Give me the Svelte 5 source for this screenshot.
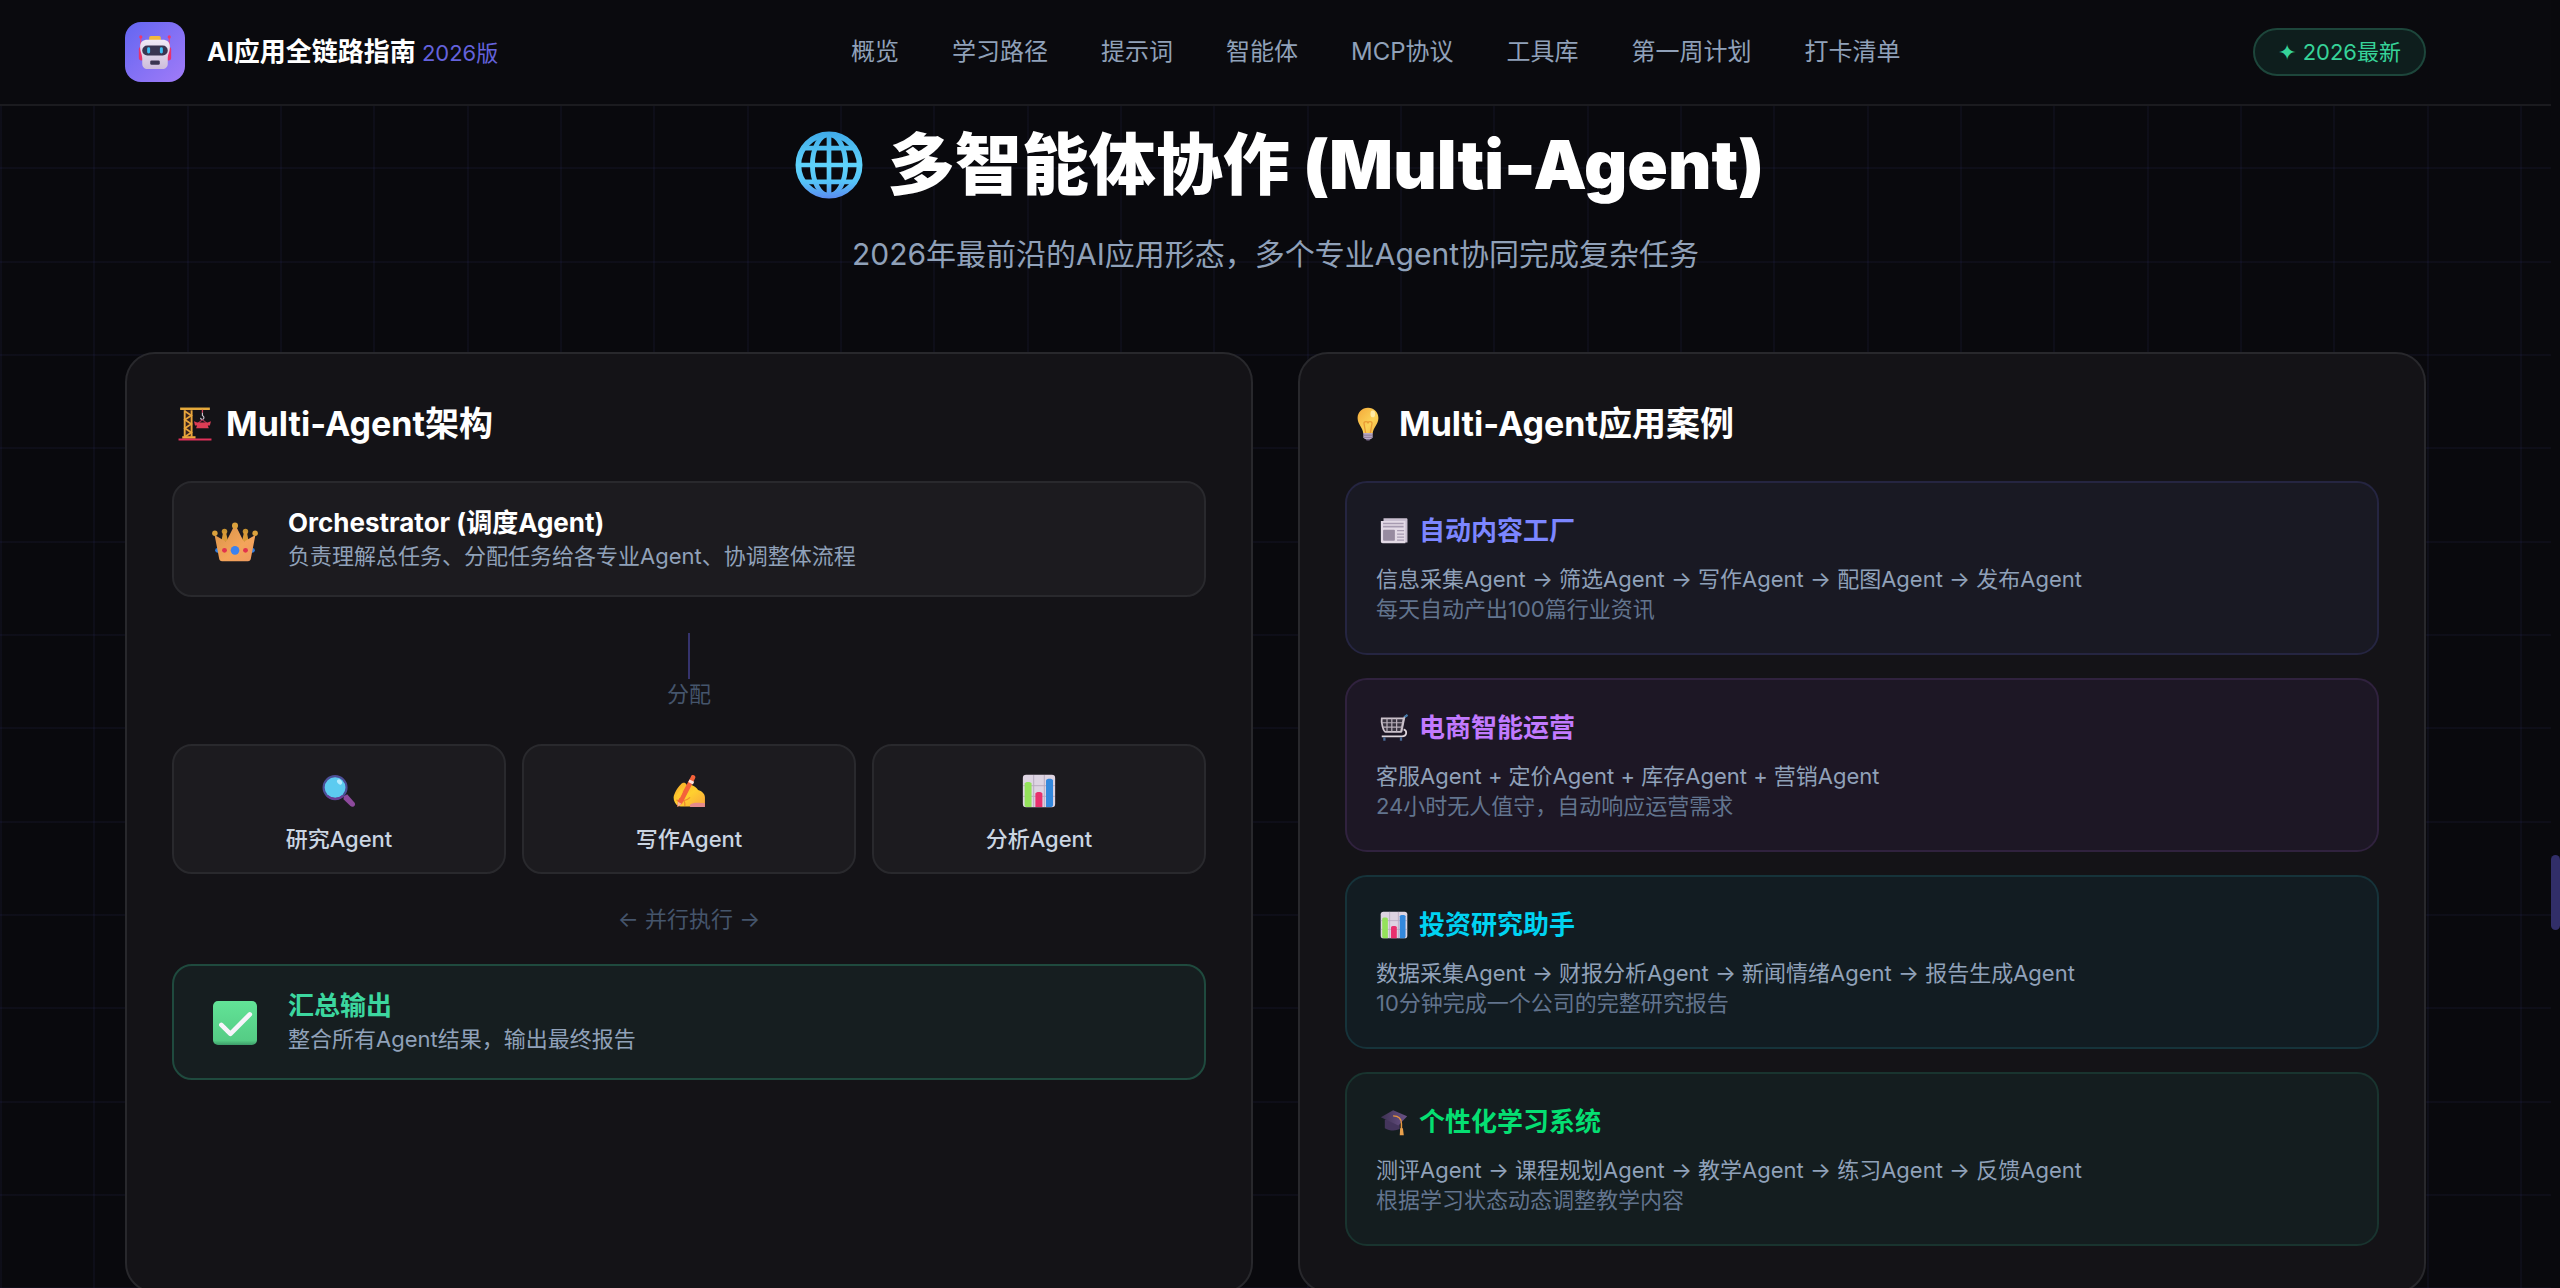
<script>
    const navLinks = ['概览', '学习路径', '提示词', '智能体', 'MCP协议', '工具库', '第一周计划', '打卡清单']

    const agents = [
        { icon: 'magnifier', name: '研究Agent' },
        { icon: 'writing', name: '写作Agent' },
        { icon: 'chart', name: '分析Agent' }
    ]

    const cases = [
        {
            icon: 'news',
            color: 'indigo',
            title: '自动内容工厂',
            flow: '信息采集Agent → 筛选Agent → 写作Agent → 配图Agent → 发布Agent',
            note: '每天自动产出100篇行业资讯'
        },
        {
            icon: 'cart',
            color: 'purple',
            title: '电商智能运营',
            flow: '客服Agent + 定价Agent + 库存Agent + 营销Agent',
            note: '24小时无人值守，自动响应运营需求'
        },
        {
            icon: 'chart',
            color: 'cyan',
            title: '投资研究助手',
            flow: '数据采集Agent → 财报分析Agent → 新闻情绪Agent → 报告生成Agent',
            note: '10分钟完成一个公司的完整研究报告'
        },
        {
            icon: 'cap',
            color: 'green',
            title: '个性化学习系统',
            flow: '测评Agent → 课程规划Agent → 教学Agent → 练习Agent → 反馈Agent',
            note: '根据学习状态动态调整教学内容'
        }
    ]
</script>

{#snippet icon(name)}
    <svg class="icon" viewBox="0 0 32 32" aria-hidden="true">
        {#if name === 'robot'}
            <path d="M2.6 2v14M29.4 2v14" stroke="#e8457f" stroke-width="1.1" />
            <circle cx="2.6" cy="1.8" r="1.5" fill="#f0386b" />
            <circle cx="29.4" cy="1.8" r="1.5" fill="#f0386b" />
            <rect x="0.8" y="11" width="5" height="13" rx="2.5" fill="#e8336a" />
            <rect x="26.2" y="11" width="5" height="13" rx="2.5" fill="#e8336a" />
            <rect x="10.5" y="1" width="11" height="6" rx="1.6" fill="#f3b93c" />
            <path d="M9 4.5h14c4.500 0 7 2.500 7 6.500 0 5-2 7-2 11v5c0 3-2 5-5 5H9c-3 0-5-2-5-5v-5c0-4-2-6-2-11 0-4 2.500-6.500 7-6.500z" fill="url(#robotFace)" />
            <rect x="4" y="9.800" width="24" height="9.400" rx="4.700" fill="#3a3550" />
            <rect x="8.600" y="11.500" width="2.800" height="6" rx="1.400" fill="#3cc0f5" />
            <rect x="20.600" y="11.500" width="2.800" height="6" rx="1.400" fill="#3cc0f5" />
            <rect x="11.500" y="24" width="9" height="4" rx="1.200" fill="#3a3550" />
        {:else if name === 'globe'}
            <circle cx="16" cy="16" r="14.400" fill="none" stroke="url(#globeLine)" stroke-width="2.700" />
            <ellipse cx="16" cy="16" rx="7.800" ry="14.400" fill="none" stroke="url(#globeLine)" stroke-width="2.300" />
            <path d="M14.900 1.500h2.200v29h-2.200zM1.500 14.900h29v2.200h-29zM4.500 6.900h23v2.300h-23zM4.500 22.800h23v2.300h-23z" fill="url(#globeLine)" />
        {:else if name === 'crane'}
            <path d="M6 3h6v25H6z" fill="#3a2420" />
            <path d="M6.300 3v25M12.800 3v25" stroke="#e9a63c" stroke-width="1.800" />
            <path d="M6.500 4l6 4-6 4 6 4-6 4 6 4-6 4" fill="none" stroke="#e9a63c" stroke-width="1.600" />
            <path d="M2 0.500h28v2.300H2z" fill="#e5a93b" />
            <path d="M4 27.500h12.500v2.300H4z" fill="#f0a83c" />
            <path d="M0.500 29.700h31V31.600H0.500z" fill="#e0315a" />
            <path d="M23 2.500v3" stroke="#d3405e" stroke-width="1.200" />
            <path d="M23 5.500v2.500c2 1 1.800 3.600 0 3.800-1.200 0-1.800-.8-1.600-1.600" fill="none" stroke="#c9c3d0" stroke-width="1.100" />
            <path d="M23 12l-5 4M23 12l5 4" stroke="#a3324f" stroke-width="1" />
            <path d="M15 13.500l3 1h10l3-1-1 4h-2l1 2.500H17l1-2.500h-2z" fill="#dc3d55" />
        {:else if name === 'bulb'}
            <path d="M16 0.800c-5.600 0-9.800 4.200-9.800 9.600 0 6 4.800 8.600 5.400 14.600h8.800c.6-6 5.400-8.600 5.400-14.600C25.800 5 21.600.8 16 .8z" fill="url(#bulbGlass)" />
            <path d="M13.800 24.500l-1.600-9c0-2.200 3.800-2.200 3.800 0 0-2.200 3.800-2.200 3.800 0l-1.600 9" fill="none" stroke="#e99a35" stroke-width="1.200" />
            <ellipse cx="20.500" cy="6.500" rx="2.200" ry="3.200" fill="#fff1b8" opacity="0.800" />
            <path d="M11.600 24.500h8.800v4.500l-1.600 1.200h-5.600L11.600 29z" fill="#b9a9c4" />
            <path d="M11.600 26.500h8.800M12 28.600h8" stroke="#85738f" stroke-width="0.800" />
            <path d="M13.500 30h5l-1.200 1.600h-2.600z" fill="#7c6b8f" />
        {:else if name === 'crown'}
            <circle cx="8.700" cy="10" r="1.900" fill="#c79331" />
            <circle cx="23.300" cy="10" r="1.900" fill="#c79331" />
            <path d="M7.800 10h1.800l1.600 7H6.500zM22.400 10h1.800l1.300 7h-4.700z" fill="#d99a38" />
            <circle cx="3.800" cy="23.200" r="1.600" fill="#2f7de0" />
            <circle cx="28.200" cy="23.200" r="1.600" fill="#2f7de0" />
            <path d="M1.800 12.500l7.200 4.200c.5.300 1 .1 1.300-.4L15 7h2l4.700 9.300c.3.500.8.700 1.300.4l7.200-4.200-3.200 16.500c-.2 1.200-.8 1.700-2 1.700H7c-1.200 0-1.800-.5-2-1.700z" fill="url(#crownGold)" />
            <circle cx="16" cy="6" r="2.100" fill="#dba13c" />
            <circle cx="2" cy="11.300" r="1.900" fill="#dba13c" />
            <circle cx="30" cy="11.300" r="1.900" fill="#dba13c" />
            <circle cx="16" cy="23.200" r="3" fill="#3c82ee" />
            <circle cx="8.700" cy="23.200" r="1.700" fill="#e2334d" />
            <circle cx="23.300" cy="23.200" r="1.700" fill="#e2334d" />
        {:else if name === 'magnifier'}
            <path d="M20.500 21l3.200-2 7 8c1.600 2.600-1.600 5-3.900 3.200l-6.600-6.400z" fill="#8d4a9c" />
            <circle cx="12.300" cy="12.800" r="10.800" fill="#5ccbf0" stroke="#4c4f96" stroke-width="2" />
            <path d="M5 20.500a10.800 10.800 0 0 0 14.800 0" fill="none" stroke="#6b3f94" stroke-width="2" />
            <ellipse cx="16.500" cy="7.500" rx="2" ry="2.800" transform="rotate(-40 16.500 7.500)" fill="#b5ecff" />
        {:else if name === 'writing'}
            <path d="M8 10c2-2.500 5-2 5.500 0 4-.5 9 1.500 11 5 3.500 1 6.500 3.500 6.500 7v8.500H20c-6 0-12 .5-14-.5-3-1.500-4.500-5-4.500-8C2 18 5 13 8 10z" fill="url(#handYellow)" />
            <path d="M4 24.500c2 0 3 1.500 3 3.500M9.500 24c2 1 3 3 2.500 6M17 22c-2 2-3.500 3-6 3" fill="none" stroke="#ee8a2e" stroke-width="1.200" />
            <path d="M17 29c3-2.500 7-2 14-1.500V31H17z" fill="#e58a8a" />
            <path d="M17.800 2.500c.8-2.500 4.600-1.500 4.200 1L9.500 28l-4.500 3 .5-5.500z" fill="#f4623a" />
            <path d="M16.500 5.200l4.400 2.200-1.200 2.400-4.400-2.200z" fill="#ffe3dc" />
            <path d="M5.500 26l3.500 2-3.700 3z" fill="#f7b79a" />
            <path d="M8.500 14c1.500 1 2 3 1 4.500l-2 4c-2 0-3-1-3.500-2.500z" fill="#ffc92e" />
        {:else if name === 'chart'}
            <rect x="0.800" y="0.800" width="30.400" height="30.400" rx="3" fill="#ddd4e2" />
            <path d="M1 11h30M1 21h30M11 1v30M21 1v30" stroke="#b8aabf" stroke-width="0.900" />
            <path d="M2.500 9c0-2 6.500-2 6.500 0v22H4c-1 0-1.500-.8-1.500-1.800z" fill="#94e25b" />
            <path d="M12.600 18.500c0-2 6.600-2 6.600 0V31h-6.600z" fill="#e8306d" />
            <path d="M22.600 6c0-2 6.600-2 6.600 0v23.200c0 1-.6 1.800-1.600 1.800h-5z" fill="#3388dd" />
        {:else if name === 'check'}
            <rect x="0.700" y="0.700" width="30.600" height="30.600" rx="3.500" fill="url(#checkGreen)" />
            <path d="M6.500 17.300l6.300 6.200L26.300 10" fill="none" stroke="#f7f4fb" stroke-width="3.200" stroke-linecap="round" stroke-linejoin="round" />
        {:else if name === 'news'}
            <path d="M4 1.500h26c.8 0 1.400.6 1.400 1.400V29H4z" fill="#c9bfd0" />
            <path d="M1 4.500h28V30H3c-1.200 0-2-.8-2-2z" fill="#e3dae6" />
            <path d="M3.500 7.500h23.500M3.500 11h23.500" stroke="#a79bb1" stroke-width="1.800" />
            <rect x="3.500" y="14.500" width="13.500" height="12.500" rx="1" fill="#978ba0" />
            <path d="M19.500 15.500h8M19.500 19.500h8M19.500 23h8M19.500 26.500h8" stroke="#a79bb1" stroke-width="1.500" />
        {:else if name === 'cart'}
            <path d="M31 1.500l-3 2-3.500 17" fill="none" stroke="#c5bcc6" stroke-width="2" />
            <path d="M31.500 1l-3.500 2.500" stroke="#3f78a8" stroke-width="2.400" />
            <path d="M2 5h25l-3 15.500H6.500C4 20.500 1 10 2 5z" fill="#3a3440" stroke="#cdc4cd" stroke-width="2" />
            <path d="M8 5v15M13.500 5v15M19 5v15M2 10h24M3.500 15h22" stroke="#b9afba" stroke-width="1.400" />
            <path d="M27 17.500c4 1 4.500 8-2 8H2" fill="none" stroke="#ddd5dc" stroke-width="2" />
            <path d="M5 26.500v4M24 26.500v4" stroke="#4a6a94" stroke-width="2.600" />
        {:else if name === 'cap'}
            <path d="M5.500 13v10c5 3 12 3.500 17 1V15z" fill="#44355c" />
            <path d="M1 10.500L15 2.500l16 7-10 10.500z" fill="url(#capTop)" />
            <path d="M15 9c6 0 9.500 3 9.500 9v6" fill="none" stroke="#e8963f" stroke-width="1.700" />
            <path d="M23 23h3.200l1 8h-4.600z" fill="#e9a04c" />
        {/if}
    </svg>
{/snippet}

<!-- Shared gradients for the icons -->
<svg class="defs" aria-hidden="true">
    <defs>
        <linearGradient id="robotFace" x1="0" y1="0" x2="0" y2="1">
            <stop offset="0" stop-color="#f1eaf5" />
            <stop offset="1" stop-color="#cdbddb" />
        </linearGradient>
        <linearGradient id="globeLine" gradientUnits="userSpaceOnUse" x1="16" y1="0" x2="16" y2="32">
            <stop offset="0" stop-color="#3fa9e8" />
            <stop offset="0.500" stop-color="#5fd3fb" />
            <stop offset="0.750" stop-color="#55c3f8" />
            <stop offset="1" stop-color="#5b8af0" />
        </linearGradient>
        <linearGradient id="bulbGlass" x1="0" y1="0" x2="1" y2="1">
            <stop offset="0" stop-color="#f4a93a" />
            <stop offset="0.600" stop-color="#fbd257" />
            <stop offset="1" stop-color="#f3b043" />
        </linearGradient>
        <linearGradient id="crownGold" x1="0" y1="0" x2="1" y2="1">
            <stop offset="0" stop-color="#d99248" />
            <stop offset="0.600" stop-color="#f4a55a" />
            <stop offset="1" stop-color="#ee9960" />
        </linearGradient>
        <linearGradient id="handYellow" x1="0" y1="0" x2="1" y2="1">
            <stop offset="0" stop-color="#f7a928" />
            <stop offset="0.500" stop-color="#ffd02f" />
            <stop offset="1" stop-color="#f8a43c" />
        </linearGradient>
        <linearGradient id="checkGreen" x1="0" y1="0" x2="0" y2="1">
            <stop offset="0" stop-color="#62e397" />
            <stop offset="0.900" stop-color="#55cc85" />
            <stop offset="1" stop-color="#3d9c69" />
        </linearGradient>
        <linearGradient id="capTop" x1="0" y1="0" x2="1" y2="0">
            <stop offset="0" stop-color="#3d3152" />
            <stop offset="1" stop-color="#6a5286" />
        </linearGradient>
    </defs>
</svg>

<div class="page">
    <header>
        <div class="header-inner">
            <div class="brand">
                <div class="logo">{@render icon('robot')}</div>
                <p class="brand-name">AI应用全链路指南 <span>2026版</span></p>
            </div>
            <nav>
                {#each navLinks as link}
                    <a href="#top">{link}</a>
                {/each}
            </nav>
            <span class="badge">✦ 2026最新</span>
        </div>
    </header>

    <main>
        <h1>{@render icon('globe')}多智能体协作 (Multi-Agent)</h1>
        <p class="subtitle">2026年最前沿的AI应用形态，多个专业Agent协同完成复杂任务</p>

        <div class="columns">
            <section class="card">
                <h2>{@render icon('crane')}Multi-Agent架构</h2>

                <div class="row">
                    {@render icon('crown')}
                    <div>
                        <h3>Orchestrator (调度Agent)</h3>
                        <p>负责理解总任务、分配任务给各专业Agent、协调整体流程</p>
                    </div>
                </div>

                <div class="connector">
                    <div class="line"></div>
                    <p>分配</p>
                </div>

                <div class="agents">
                    {#each agents as agent}
                        <div class="agent">
                            {@render icon(agent.icon)}
                            <p>{agent.name}</p>
                        </div>
                    {/each}
                </div>

                <p class="parallel">← 并行执行 →</p>

                <div class="row output">
                    {@render icon('check')}
                    <div>
                        <h3>汇总输出</h3>
                        <p>整合所有Agent结果，输出最终报告</p>
                    </div>
                </div>
            </section>

            <section class="card">
                <h2>{@render icon('bulb')}Multi-Agent应用案例</h2>

                <div class="cases">
                    {#each cases as item}
                        <div class="case {item.color}">
                            <h3>{@render icon(item.icon)}{item.title}</h3>
                            <p>{item.flow}</p>
                            <p class="note">{item.note}</p>
                        </div>
                    {/each}
                </div>
            </section>
        </div>
    </main>
    <div class="scroll-thumb"></div>
</div>

<style>
    :global(body){
        overflow: hidden;
        background-color: #09090d;
        font-family: Inter, "Noto Sans CJK SC", sans-serif;
    }

    h1, h2, h3, p{
        margin: 0;
    }

    .defs{
        position: absolute;
        width: 0;
        height: 0;
    }

    .icon{
        display: block;
        flex: none;
        overflow: visible;
    }

    .page{
        position: relative;
        height: 100vh;
        overflow: hidden;
        padding-right: 9px;
        box-sizing: border-box;
        /* three grid cells per 280px tile */
        --line: rgba(99, 102, 241, 0.05);
        --cells: var(--line) 0 2px, transparent 2px 93px, var(--line) 93px 95px, transparent 95px 187px, var(--line) 187px 189px, transparent 189px;
        background:
            linear-gradient(90deg, var(--cells)) 0 0 / 280px 280px content-box,
            linear-gradient(var(--cells)) 0 74px / 280px 280px content-box,
            #09090d;
    }

    header{
        background-color: #0a0a0e;
        border-bottom: 2px solid #1b1b1f;
    }

    .header-inner{
        display: flex;
        align-items: center;
        justify-content: space-between;
        max-width: 2301px;
        height: 104px;
        margin: 0 auto;
    }

    .brand{
        display: flex;
        align-items: center;
        gap: 22px;
    }

    .logo{
        display: flex;
        align-items: center;
        justify-content: center;
        width: 60px;
        height: 60px;
        border-radius: 16px;
        background: linear-gradient(135deg, #6366f1, #a17bf8);
    }

    .logo .icon{
        width: 34px;
        height: 34px;
    }

    .brand-name{
        font-size: 26px;
        font-weight: 700;
        line-height: 34px;
        color: #fff;
    }

    .brand-name span{
        font-size: 22px;
        font-weight: 400;
        color: #6462dc;
    }

    nav{
        display: flex;
        gap: 53px;
    }

    nav a{
        font-size: 24px;
        line-height: 34px;
        color: #90a1b9;
        text-decoration: none;
    }

    .badge{
        padding: 0 23px;
        border: 2px solid #1d463b;
        border-radius: 24px;
        background-color: #0e1e1d;
        font-size: 22px;
        line-height: 44px;
        color: #36d399;
    }

    main{
        max-width: 2301px;
        margin: 0 auto;
        padding-top: 23px;
    }

    h1{
        display: flex;
        align-items: center;
        justify-content: center;
        gap: 25px;
        padding-left: 8px;
        font-size: 67px;
        font-weight: 900;
        line-height: 72px;
        color: #fff;
    }

    h1 .icon{
        width: 68px;
        height: 68px;
    }

    .subtitle{
        margin: 32px 0 77px;
        text-align: center;
        font-size: 30px;
        line-height: 42px;
        color: #90a1b9;
    }

    .columns{
        display: grid;
        grid-template-columns: 1fr 1fr;
        gap: 45px;
    }

    .card{
        padding: 45px;
        border: 2px solid #28282c;
        border-radius: 30px;
        background-color: #141317;
    }

    h2{
        display: flex;
        align-items: center;
        gap: 14px;
        margin-bottom: 32px;
        padding-left: 6px;
        font-size: 34px;
        font-weight: 700;
        line-height: 50px;
        color: #fff;
    }

    h2 .icon{
        width: 34px;
        height: 34px;
    }

    h3{
        font-size: 26px;
        font-weight: 700;
        line-height: 34px;
        color: #fff;
    }

    .row{
        display: flex;
        align-items: center;
        gap: 30px;
        padding: 23px 38px 22px;
        border: 2px solid #29292d;
        border-radius: 20px;
        background-color: #1c1b1f;
    }

    .row .icon{
        width: 46px;
        height: 46px;
    }

    .row p{
        font-size: 22px;
        line-height: 33px;
        color: #90a1b9;
    }

    .output{
        border-color: #1f4a3e;
        background-color: #161e20;
    }

    .output h3{
        color: #3cd79f;
    }

    .connector{
        display: flex;
        flex-direction: column;
        align-items: center;
        padding: 36px 0 35px;
    }

    .line{
        width: 2px;
        height: 46px;
        background-color: #35336d;
    }

    .connector p, .parallel{
        font-size: 22px;
        line-height: 30px;
        color: #45556c;
    }

    .parallel{
        padding: 30px 0;
        text-align: center;
    }

    .agents{
        display: grid;
        grid-template-columns: repeat(3, 1fr);
        gap: 16px;
    }

    .agent{
        display: flex;
        flex-direction: column;
        align-items: center;
        gap: 16px;
        padding: 28px 0 18px;
        border: 2px solid #29292d;
        border-radius: 20px;
        background-color: #1c1b1f;
    }

    .agent .icon{
        width: 34px;
        height: 34px;
    }

    .agent p{
        font-size: 22px;
        font-weight: 500;
        line-height: 30px;
        color: #cad5e2;
    }

    .cases{
        display: grid;
        gap: 23px;
    }

    .case{
        padding: 29px;
        border: 2px solid;
        border-radius: 22px;
    }

    .case h3{
        display: flex;
        align-items: center;
        gap: 11px;
        margin-bottom: 14px;
        padding-left: 4px;
        line-height: 38px;
    }

    .case h3 .icon{
        width: 28px;
        height: 28px;
    }

    .case p{
        font-size: 22px;
        line-height: 30px;
        color: #90a1b9;
    }

    .case .note{
        color: #62748e;
    }

    .indigo{
        border-color: #252541;
        background-color: #191923;
    }

    .indigo h3{
        color: #7c86ff;
    }

    .purple{
        border-color: #30223e;
        background-color: #1d1725;
    }

    .purple h3{
        color: #c27aff;
    }

    .cyan{
        border-color: #16333a;
        background-color: #121c22;
    }

    .cyan h3{
        color: #00d3f2;
    }

    .green{
        border-color: #19342f;
        background-color: #141d1f;
    }

    .green h3{
        color: #05df72;
    }

    .scroll-thumb{
        position: absolute;
        top: 855px;
        right: 0;
        width: 9px;
        height: 75px;
        border-radius: 5px;
        background-color: #312e68;
    }
</style>
